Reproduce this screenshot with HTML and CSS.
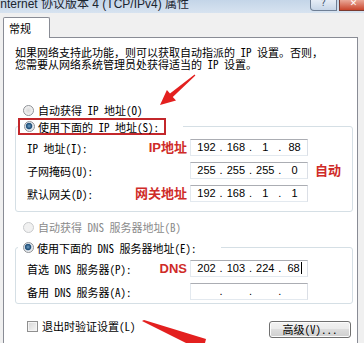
FILE: index.html
```html
<!DOCTYPE html>
<html lang="zh-CN">

<head>
  <meta charset="UTF-8" />
  <meta name="viewport" content="width=device-width, initial-scale=1.0" />
  <title>Internet 协议版本 4 (TCP/IPv4) 属性</title>
  <link rel="stylesheet" href="styles.css">
</head>

<body>
  <div class="dialog">
    <div class="titlebar">
      <span class="title">Internet 协议版本 4 (TCP/IPv4) 属性</span>
      <div class="caption">
        <span class="cap-btn help">?</span>
        <span class="cap-btn close">✕</span>
      </div>
    </div>

    <div class="tabs">
      <div class="tab">常规</div>
    </div>

    <div class="panel">
      <p class="intro">如果网络支持此功能，则可以获取自动指派的 IP 设置。否则，<br>您需要从网络系统管理员处获得适当的 IP 设置。</p>

      <div class="option top"><span class="radio"></span>自动获得 IP 地址(O)</div>

      <fieldset class="group">
        <legend><span class="option boxed"><span class="radio checked"></span>使用下面的 IP 地址(S):</span></legend>
        <div class="fields">
          <div class="field">
            <span class="label">IP 地址(I):</span>
            <span class="note">IP地址</span>
            <div class="ip"><span class="oct">192</span><span class="dot">.</span><span class="oct">168</span><span class="dot">.</span><span class="oct">1</span><span class="dot">.</span><span class="oct">88</span></div>
            <span class="note extra"></span>
          </div>
          <div class="field">
            <span class="label">子网掩码(U):</span>
            <span class="note"></span>
            <div class="ip"><span class="oct">255</span><span class="dot">.</span><span class="oct">255</span><span class="dot">.</span><span class="oct">255</span><span class="dot">.</span><span class="oct">0</span></div>
            <span class="note extra">自动</span>
          </div>
          <div class="field">
            <span class="label">默认网关(D):</span>
            <span class="note">网关地址</span>
            <div class="ip"><span class="oct">192</span><span class="dot">.</span><span class="oct">168</span><span class="dot">.</span><span class="oct">1</span><span class="dot">.</span><span class="oct">1</span></div>
            <span class="note extra"></span>
          </div>
        </div>
      </fieldset>

      <div class="option disabled dns-auto"><span class="radio"></span>自动获得 DNS 服务器地址(B)</div>

      <fieldset class="group dns">
        <legend><span class="option plain"><span class="radio checked"></span>使用下面的 DNS 服务器地址(E):</span></legend>
        <div class="fields">
          <div class="field">
            <span class="label">首选 DNS 服务器(P):</span>
            <span class="note">DNS</span>
            <div class="ip"><span class="oct">202</span><span class="dot">.</span><span class="oct">103</span><span class="dot">.</span><span class="oct">224</span><span class="dot">.</span><span class="oct">68<span class="caret"></span></span></div>
            <span class="note extra"></span>
          </div>
          <div class="field">
            <span class="label">备用 DNS 服务器(A):</span>
            <span class="note"></span>
            <div class="ip"><span class="oct"></span><span class="dot">.</span><span class="oct"></span><span class="dot">.</span><span class="oct"></span><span class="dot">.</span><span class="oct"></span></div>
            <span class="note extra"></span>
          </div>
        </div>
      </fieldset>

      <div class="footer">
        <label class="check"><span class="box"></span>退出时验证设置(L)</label>
        <button class="advanced">高级(V)...</button>
      </div>
    </div>

    <!-- red arrows drawn over the screenshot -->
    <svg class="arrows" width="364" height="343" viewBox="0 0 364 343">
      <polygon fill="#e3201f" points="160,105 176,100.6 172.8,96.9 195.4,75.5 194.6,74.5 170,93.6 166.9,89.9" />
      <polygon fill="#e3201f" points="142,321 144,320 206,339 205,343 186,343" />
    </svg>
  </div>
</body>

</html>
```

FILE: styles.css
```css
body {
  margin: 0;
  font-family: "Noto Sans Mono CJK SC", "Noto Sans CJK SC", sans-serif;
  font-size: 11px;
  color: #000;
  background: #f0f0f0;
}

.dialog {
  position: relative;
  width: 364px;
  height: 343px;
  overflow: hidden;
  background: #f0f0f0;
}

/* title bar, cut off at the top */
.titlebar {
  display: flex;
  justify-content: space-between;
  height: 13px;
  overflow: hidden;
  background: linear-gradient(#c4d5e8, #d7e3f0);
}

.title {
  margin: -3px 0 0 -3px;
  font-family: "Liberation Sans", "Noto Sans CJK SC", sans-serif;
  font-size: 12px;
  line-height: 14px;
  color: #1b2530;
  white-space: nowrap;
}

.caption {
  display: flex;
  gap: 2px;
  margin-right: -4px;
}

.cap-btn {
  display: block;
  box-sizing: border-box;
  height: 11px;
  font-family: "DejaVu Sans", sans-serif;
  font-size: 9px;
  line-height: 6px;
  text-align: center;
  border: 1px solid #6f7f95;
  border-top: none;
}

.help {
  width: 27px;
  color: #3d5068;
  border-radius: 0 0 0 4px;
  background: linear-gradient(#e6edf6, #c6d5e7);
}

.close {
  width: 29px;
  color: #fff;
  border-color: #7a3a30;
  border-radius: 0 0 4px 0;
  background: linear-gradient(#eaa898, #c9452c);
}

/* tab strip */
.tabs {
  height: 24px;
  display: flex;
  align-items: flex-start;
}

.tab {
  position: relative;
  z-index: 1;
  box-sizing: border-box;
  width: 47px;
  height: 21px;
  margin: 4px 0 -1px 3px;
  padding: 4px 0 0 5px;
  line-height: 12px;
  background: #fff;
  border: 1px solid #898c95;
  border-bottom: none;
  border-radius: 2px 2px 0 0;
}

.panel {
  height: 320px;
  margin: 0 6px 0 3px;
  background: #fff;
  border: 1px solid #898c95;
}

.intro {
  margin: 8px 0 0 11px;
  line-height: 12px;
  white-space: nowrap;
}

/* radio options */
.option {
  display: flex;
  align-items: center;
  height: 16px;
  line-height: 12px;
  white-space: nowrap;
}

.option.top {
  margin-top: 32px;
  padding-left: 19px;
}

.option.disabled {
  color: #8a8a8a;
}

.option.dns-auto {
  margin-top: 7px;
  padding-left: 19px;
}

.radio {
  box-sizing: border-box;
  width: 11px;
  height: 11px;
  margin-right: 4px;
  border: 1px solid #8f9297;
  border-radius: 50%;
  background: radial-gradient(circle at 50% 50%, #d9d9d9 0, #f6f6f6 5px);
}

.radio.checked {
  background: radial-gradient(circle at 45% 45%, #6ea0c4 0, #23507a 2.5px, #3c6b91 3px, #d8dfe6 3.6px, #f4f4f4 5px);
}

.option.disabled .radio {
  border-color: #c9cbcd;
  background: #f1f1f1;
}

.option.boxed,
.option.plain {
  height: 13px;
  padding: 0 5px 0 4px;
  border: 2px solid #c3272b;
}

.option.plain {
  border-color: transparent;
  padding-left: 3px;
}

.option.boxed .radio,
.option.plain .radio {
  margin-right: 3px;
}

/* group boxes */
.group {
  margin: 0 4px 0 11px;
  padding: 0 2px 9px;
  border: 1px solid #d5dfe5;
  border-radius: 3px;
}

.group.dns {
  margin-top: 4px;
  padding-bottom: 3px;
}

.group legend {
  padding: 0 17px 0 0;
}

.fields {
  display: grid;
  gap: 6px;
  padding: 4px 0 0 9px;
}

.field {
  display: grid;
  grid-template-columns: 1fr auto 118px 42px;
  align-items: center;
  height: 17px;
}

.label {
  white-space: nowrap;
  line-height: 12px;
}

.note {
  margin-right: 3px;
  font-family: "Liberation Sans", "Noto Sans CJK SC", sans-serif;
  font-size: 13px;
  font-weight: bold;
  line-height: 15px;
  color: #cf2b28;
  white-space: nowrap;
}

.note.extra {
  margin: 0 0 0 7px;
}

.ip {
  display: flex;
  box-sizing: border-box;
  height: 17px;
  padding-left: 3px;
  font-family: "Liberation Sans", sans-serif;
  font-size: 11px;
  line-height: 15px;
  border: 1px solid;
  border-color: #abadb3 #dbdfe6 #e3e9ef #e3e9ef;
}

.oct {
  width: 25px;
  text-align: center;
}

.dot {
  width: 4.5px;
  text-align: center;
}

.caret {
  display: inline-block;
  width: 1px;
  height: 12px;
  margin-left: 1px;
  vertical-align: -2px;
  background: #000;
}

/* bottom row */
.footer {
  display: flex;
  justify-content: space-between;
  align-items: flex-start;
  margin-top: 14px;
  padding: 0 6px 0 23px;
}

.check {
  display: flex;
  align-items: center;
  height: 16px;
  line-height: 12px;
}

.box {
  box-sizing: border-box;
  width: 11px;
  height: 11px;
  margin-right: 4px;
  border: 1px solid #8f8f8f;
  background: linear-gradient(135deg, #d6d6d6, #f6f6f6);
  box-shadow: inset 0 0 0 1px #f4f4f4;
}

.advanced {
  box-sizing: border-box;
  width: 82px;
  height: 17px;
  margin-top: 3px;
  padding: 0;
  font-family: inherit;
  font-size: 11px;
  line-height: 13px;
  color: #000;
  border: 1px solid #707070;
  border-radius: 3px;
  background: linear-gradient(#f2f2f2 0, #ebebeb 50%, #dddddd 50%, #cfcfcf 100%);
  box-shadow: inset 0 0 0 1px #fcfcfc;
}

.arrows {
  position: absolute;
  left: 0;
  top: 0;
}
```
